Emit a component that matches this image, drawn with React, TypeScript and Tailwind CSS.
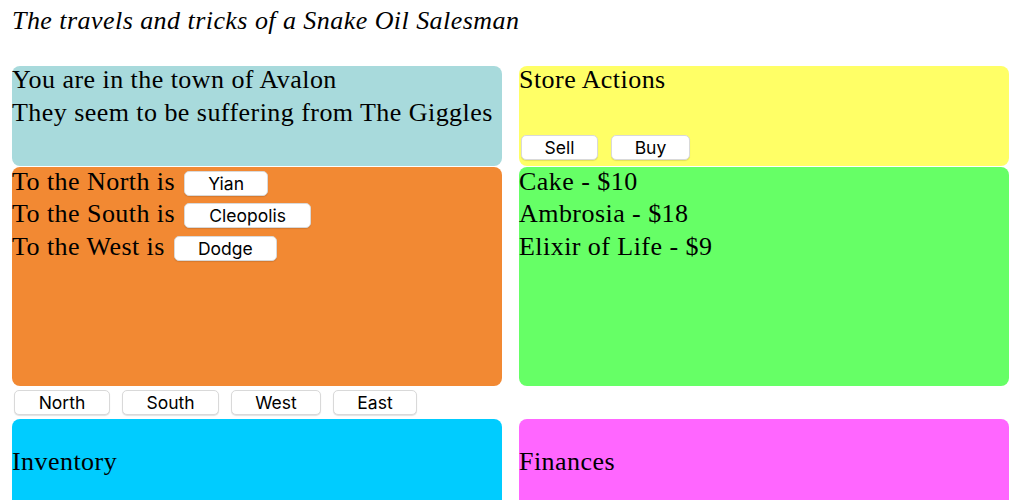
import React from "react";

function Btn({ w, children }: { w: string; children: React.ReactNode }) {
  return (
    <button
      className={`${w} h-[25px] shrink-0 bg-white border border-[#d9d9d9] rounded-[5px] shadow-[0_1px_1px_rgba(0,0,0,0.12)] font-['Inter',sans-serif] text-[17.5px] leading-[23px] tracking-normal text-black text-center`}
    >
      {children}
    </button>
  );
}

function Row({ children }: { children: React.ReactNode }) {
  return <div className="h-[32.5px] flex items-baseline">{children}</div>;
}

export default function App() {
  return (
    <div className="w-[1024px] h-[500px] overflow-hidden bg-white text-black font-['Liberation_Serif',serif] text-[26px] tracking-[0.45px]">
      <div className="pl-[12px] pt-[6px] leading-[30px] italic">
        The travels and tricks of a Snake Oil Salesman
      </div>
      <div className="mt-[30px] pl-[12px] flex gap-[17px]">
        {/* left column */}
        <div className="w-[490px] flex flex-col">
          <div className="h-[100px] rounded-[8px] bg-[#a8dadc] pt-[1px] flex flex-col gap-[7px] leading-[26px]">
            <div>You are in the town of Avalon</div>
            <div>They seem to be suffering from The Giggles</div>
          </div>
          <div className="mt-[1px] h-[219px] rounded-[8px] bg-[#f28933] pt-[1.5px] leading-[26px]">
            <Row>
              <span>To the North is</span>
              <span className="ml-[9px]">
                <Btn w="w-[84px]">Yian</Btn>
              </span>
            </Row>
            <Row>
              <span>To the South is</span>
              <span className="ml-[9px]">
                <Btn w="w-[127px]">Cleopolis</Btn>
              </span>
            </Row>
            <Row>
              <span>To the West is</span>
              <span className="ml-[9px]">
                <Btn w="w-[103px]">Dodge</Btn>
              </span>
            </Row>
          </div>
          <div className="h-[33px] pt-[4px] pl-[2px] flex gap-[12px]">
            <Btn w="w-[96px]">North</Btn>
            <Btn w="w-[97px]">South</Btn>
            <Btn w="w-[90px]">West</Btn>
            <Btn w="w-[84px]">East</Btn>
          </div>
          <div className="h-[150px] rounded-[8px] bg-[#00ccff] pt-[30px] leading-[26px]">
            Inventory
          </div>
        </div>
        {/* right column */}
        <div className="w-[490px] flex flex-col">
          <div className="h-[100px] rounded-[8px] bg-[#ffff66] pt-[1px] flex flex-col leading-[26px]">
            <div>Store Actions</div>
            <div className="mt-[42px] pl-[2px] flex gap-[13px]">
              <Btn w="w-[77px]">Sell</Btn>
              <Btn w="w-[79px]">Buy</Btn>
            </div>
          </div>
          <div className="mt-[1px] h-[219px] rounded-[8px] bg-[#66ff66] pt-[1.5px] leading-[26px]">
            <Row>
              <span>Cake - $10</span>
            </Row>
            <Row>
              <span>Ambrosia - $18</span>
            </Row>
            <Row>
              <span>Elixir of Life - $9</span>
            </Row>
          </div>
          <div className="h-[33px]" />
          <div className="h-[150px] rounded-[8px] bg-[#ff66ff] pt-[30px] leading-[26px]">
            Finances
          </div>
        </div>
      </div>
    </div>
  );
}
